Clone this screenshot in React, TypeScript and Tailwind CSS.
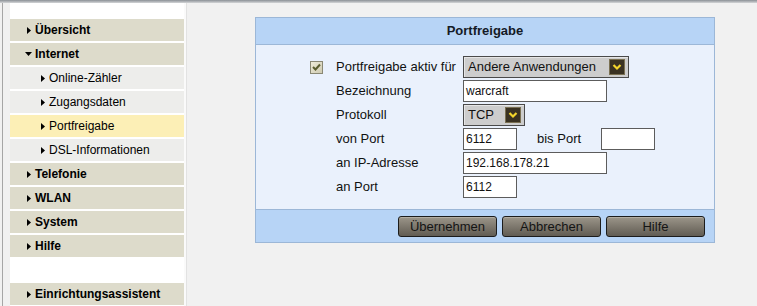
import React from "react";

type MenuItem = {
  label: string;
  kind: "main" | "open" | "sub" | "active";
};

const menu: MenuItem[] = [
  { label: "Übersicht", kind: "main" },
  { label: "Internet", kind: "open" },
  { label: "Online-Zähler", kind: "sub" },
  { label: "Zugangsdaten", kind: "sub" },
  { label: "Portfreigabe", kind: "active" },
  { label: "DSL-Informationen", kind: "sub" },
  { label: "Telefonie", kind: "main" },
  { label: "WLAN", kind: "main" },
  { label: "System", kind: "main" },
  { label: "Hilfe", kind: "main" },
];

function RightArrow() {
  return (
    <svg width="4" height="7" viewBox="0 0 4 7" className="shrink-0">
      <polygon points="0,0 4,3.5 0,7" fill="#000" />
    </svg>
  );
}

function DownArrow() {
  return (
    <svg width="7" height="4" viewBox="0 0 7 4" className="shrink-0">
      <polygon points="0,0 7,0 3.5,4" fill="#000" />
    </svg>
  );
}

function MenuRow({ item }: { item: MenuItem }) {
  if (item.kind === "open") {
    return (
      <div className="h-[22px] flex items-center gap-[3px] pl-[15px] bg-[#dddbcb] text-[12px] font-bold">
        <DownArrow />
        <span>{item.label}</span>
      </div>
    );
  }
  if (item.kind === "sub" || item.kind === "active") {
    return (
      <div
        className={
          item.kind === "active"
            ? "h-[22px] flex items-center gap-[4px] pl-[31px] bg-[#fcefb6] text-[12px]"
            : "h-[22px] flex items-center gap-[4px] pl-[31px] bg-[#ededeb] text-[12px]"
        }
      >
        <RightArrow />
        <span>{item.label}</span>
      </div>
    );
  }
  return (
    <div className="h-[22px] flex items-center gap-[4px] pl-[17px] bg-[#dddbcb] text-[12px] font-bold">
      <RightArrow />
      <span>{item.label}</span>
    </div>
  );
}

function ArrowBox() {
  return (
    <div className="w-[16px] h-[16px] shrink-0 flex items-center justify-center bg-[#3a3222] border border-[#7a7052]">
      <svg width="10" height="8" viewBox="0 0 10 8">
        <polyline points="1.5,2 5,5.5 8.5,2" fill="none" stroke="#f3d52c" strokeWidth="2.2" />
      </svg>
    </div>
  );
}

function Select({ value, width }: { value: string; width: string }) {
  return (
    <div
      className={`h-[22px] ${width} flex items-center border border-[#4a4a4a] bg-[#cdcdcd] shadow-[inset_1px_1px_0_#e6e6e6] pl-[4px] pr-[3px]`}
    >
      <span className="flex-1 text-[13px] text-[#111]">{value}</span>
      <ArrowBox />
    </div>
  );
}

function Input({ value, width }: { value: string; width: string }) {
  return (
    <div
      className={`h-[22px] ${width} flex items-center border border-[#5c5c5c] bg-white px-[2px] text-[12px] text-[#111]`}
    >
      {value}
    </div>
  );
}

function Button({ label }: { label: string }) {
  return (
    <button className="w-[99px] h-[21px] rounded-[3px] border border-[#1c1c1c] bg-linear-to-b from-[#9c968a] to-[#615c53] shadow-[inset_0_1px_0_#b4aea2] text-[13px] text-[#141414] leading-none">
      {label}
    </button>
  );
}

export default function App() {
  return (
    <div className="w-[757px] h-[306px] overflow-hidden bg-[#f1f1f1] font-['Liberation_Sans',Arial,sans-serif] text-black flex flex-col">
      <div className="h-[3px] shrink-0 bg-linear-to-b from-[#8b9096] to-[#d4d6d8]" />
      <div className="flex flex-1 min-h-0">
        <div className="w-[10px] shrink-0 flex">
          <div className="ml-[2px] w-px bg-[#a6a6a6]" />
        </div>

        <nav className="w-[174px] shrink-0 bg-white pt-[16px] flex flex-col gap-[2px]">
          {menu.map((item) => (
            <MenuRow key={item.label} item={item} />
          ))}
          <div className="mt-[24px]">
            <MenuRow item={{ label: "Einrichtungsassistent", kind: "main" }} />
          </div>
        </nav>

        <div className="w-[2px] shrink-0 bg-[#fafafa]" />
        <div className="w-px shrink-0 bg-[#e2e2e2]" />

        <main className="pl-[68px] pt-[14px]">
          <div className="w-[460px] border border-[#9cb7d7]">
            <div className="h-[27px] border-b border-[#9cb7d7] bg-[#b7d4f6] flex items-center justify-center text-[13px] font-bold text-[#141a26]">
              Portfreigabe
            </div>

            <div className="h-[164px] bg-[#eaf1fc] pt-[11px] pl-[54px]">
              <div className="grid grid-cols-[26px_127px_auto] auto-rows-[22px] gap-y-[2px] items-center text-[13px] text-[#111]">
                <div className="w-[13px] h-[13px] border border-[#8a8874] bg-linear-to-br from-[#eeebd8] to-[#cfcbb2] flex items-center justify-center">
                  <svg width="9" height="8" viewBox="0 0 9 8">
                    <polyline points="1,4 3.5,6.5 8,1.5" fill="none" stroke="#5a5d2e" strokeWidth="2" />
                  </svg>
                </div>
                <span>Portfreigabe aktiv für</span>
                <Select value="Andere Anwendungen" width="w-[166px]" />

                <span />
                <span>Bezeichnung</span>
                <Input value="warcraft" width="w-[144px]" />

                <span />
                <span>Protokoll</span>
                <Select value="TCP" width="w-[62px]" />

                <span />
                <span>von Port</span>
                <div className="flex items-center gap-[20px]">
                  <Input value="6112" width="w-[54px]" />
                  <span>bis Port</span>
                  <Input value="" width="w-[54px]" />
                </div>

                <span />
                <span>an IP-Adresse</span>
                <Input value="192.168.178.21" width="w-[144px]" />

                <span />
                <span>an Port</span>
                <Input value="6112" width="w-[54px]" />
              </div>
            </div>

            <div className="h-[33px] border-t border-[#9cb7d7] bg-[#b7d4f6] flex items-center justify-end gap-[5px] pr-[9px]">
              <Button label="Übernehmen" />
              <Button label="Abbrechen" />
              <Button label="Hilfe" />
            </div>
          </div>
        </main>
      </div>
    </div>
  );
}
